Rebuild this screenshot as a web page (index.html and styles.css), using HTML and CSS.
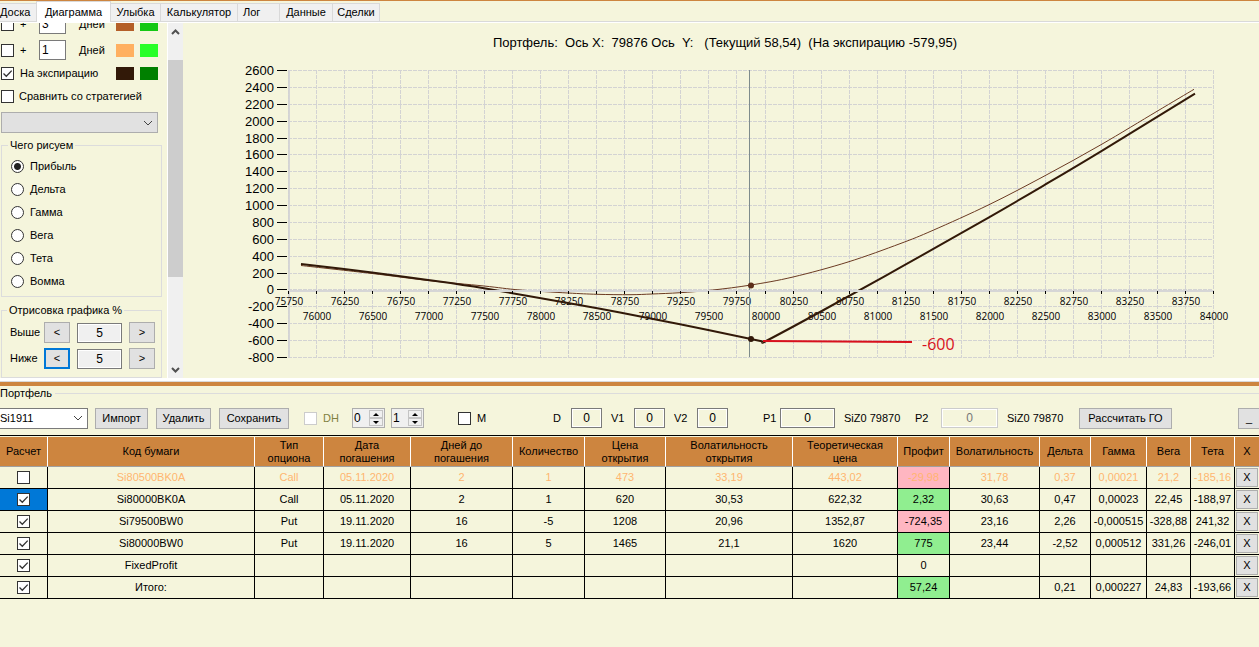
FILE: index.html
```html
<!DOCTYPE html>
<html lang="ru">
<head>
<meta charset="utf-8">
<title>Портфель опционов</title>
<link rel="stylesheet" href="styles.css">
</head>
<body>
<nav class="tabs" role="tablist">
  <button class="tab tab-first" role="tab">Доска</button>
  <button class="tab tab-active" role="tab" aria-selected="true">Диаграмма</button>
  <button class="tab" role="tab">Улыбка</button>
  <button class="tab" role="tab">Калькулятор</button>
  <button class="tab tab-log" role="tab">Лог</button>
  <button class="tab" role="tab">Данные</button>
  <button class="tab tab-last" role="tab">Сделки</button>
</nav>

<main class="workspace">
  <aside class="side">
    <div class="side-body">
      <div class="days">
        <label class="check"><input type="checkbox"> +</label>
        <input class="box" type="text" value="3" aria-label="Дней вперед">
        <span>Дней</span><i class="swatch rust"></i><i class="swatch green"></i>
      </div>
      <div class="days">
        <label class="check"><input type="checkbox"> +</label>
        <input class="box" type="text" value="1" aria-label="Дней вперед">
        <span>Дней</span><i class="swatch peach"></i><i class="swatch lime"></i>
      </div>
      <div class="days expiry">
        <label class="check wide"><input type="checkbox" checked> На экспирацию</label>
        <i class="swatch brown"></i><i class="swatch forest"></i>
      </div>
      <label class="check compare"><input type="checkbox"> Сравнить со стратегией</label>
      <select class="strategy" aria-label="Стратегия"><option></option></select>
      <fieldset class="group kinds">
        <legend>Чего рисуем</legend>
        <label><input type="radio" name="kind" checked>Прибыль</label>
        <label><input type="radio" name="kind">Дельта</label>
        <label><input type="radio" name="kind">Гамма</label>
        <label><input type="radio" name="kind">Вега</label>
        <label><input type="radio" name="kind">Тета</label>
        <label><input type="radio" name="kind">Вомма</label>
      </fieldset>
      <fieldset class="group range">
        <legend>Отрисовка графика %</legend>
        <label for="above">Выше</label><button class="btn">&lt;</button><input id="above" class="box readonly" type="text" value="5"><button class="btn">&gt;</button>
        <label for="below">Ниже</label><button class="btn focused">&lt;</button><input id="below" class="box readonly" type="text" value="5"><button class="btn">&gt;</button>
      </fieldset>
    </div>
    <div class="scroll">
      <button aria-label="Вверх"><svg width="9" height="6" viewBox="0 0 9 6"><path d="M1 5 4.500 1.500 8 5"/></svg></button>
      <div class="scroll-track"><div class="scroll-thumb"></div></div>
      <button aria-label="Вниз"><svg width="9" height="6" viewBox="0 0 9 6"><path d="M1 1 4.500 4.500 8 1"/></svg></button>
    </div>
  </aside>
  <section class="plot">
    <svg id="chart" class="chart" viewBox="183 23 1076 355" role="img" aria-label="Прибыль портфеля"></svg>
  </section>
</main>

<section class="portfolio">
  <h2 class="portfolio-title">Портфель</h2>
  <form class="toolbar">
    <select class="portfolio-select" aria-label="Портфель"><option>Si1911</option></select>
    <button type="button" class="btn import">Импорт</button>
    <button type="button" class="btn delete">Удалить</button>
    <button type="button" class="btn save">Сохранить</button>
    <label class="check dim"><input type="checkbox" disabled> DH</label>
    <span class="spin"><input type="text" value="0" aria-label="DH от"><span class="spin-keys"><button type="button" aria-label="Больше"></button><button type="button" aria-label="Меньше" class="down"></button></span></span>
    <span class="spin"><input type="text" value="1" aria-label="DH до"><span class="spin-keys"><button type="button" aria-label="Больше"></button><button type="button" aria-label="Меньше" class="down"></button></span></span>
    <label class="check"><input type="checkbox"> M</label>
    <label for="d">D</label><input id="d" class="box num" type="text" value="0">
    <label for="v1">V1</label><input id="v1" class="box num" type="text" value="0">
    <label for="v2">V2</label><input id="v2" class="box num" type="text" value="0">
    <label for="p1">P1</label><input id="p1" class="box num price" type="text" value="0">
    <span>SiZ0 79870</span>
    <label for="p2">P2</label><input id="p2" class="box num price" type="text" value="0" disabled>
    <span>SiZ0 79870</span>
    <button type="button" class="btn calc">Рассчитать ГО</button>
    <button type="button" class="btn minimize">_</button>
  </form>
  <table class="grid">
    <colgroup>
      <col class="w48"><col class="w207"><col class="w69"><col class="w87"><col class="w102"><col class="w72"><col class="w81"><col class="w127"><col class="w105"><col class="w52"><col class="w90"><col class="w51"><col class="w56"><col class="w44"><col class="w44"><col class="w24">
    </colgroup>
    <thead>
      <tr><th>Расчет</th><th>Код бумаги</th><th>Тип<br>опциона</th><th>Дата<br>погашения</th><th>Дней до<br>погашения</th><th>Количество</th><th>Цена<br>открытия</th><th>Волатильность<br>открытия</th><th>Теоретическая<br>цена</th><th>Профит</th><th>Волатильность</th><th>Дельта</th><th>Гамма</th><th>Вега</th><th>Тета</th><th>X</th></tr>
    </thead>
    <tbody>
      <tr class="off"><td><input type="checkbox" aria-label="Расчет"></td><td>Si80500BK0A</td><td>Call</td><td>05.11.2020</td><td>2</td><td>1</td><td>473</td><td>33,19</td><td>443,02</td><td class="loss">-29,98</td><td>31,78</td><td>0,37</td><td>0,00021</td><td>21,2</td><td>-185,16</td><td><button class="btn">X</button></td></tr>
      <tr><td class="current"><input type="checkbox" checked aria-label="Расчет"></td><td>Si80000BK0A</td><td>Call</td><td>05.11.2020</td><td>2</td><td>1</td><td>620</td><td>30,53</td><td>622,32</td><td class="gain">2,32</td><td>30,63</td><td>0,47</td><td>0,00023</td><td>22,45</td><td>-188,97</td><td><button class="btn">X</button></td></tr>
      <tr><td><input type="checkbox" checked aria-label="Расчет"></td><td>Si79500BW0</td><td>Put</td><td>19.11.2020</td><td>16</td><td>-5</td><td>1208</td><td>20,96</td><td>1352,87</td><td class="loss">-724,35</td><td>23,16</td><td>2,26</td><td>-0,000515</td><td>-328,88</td><td>241,32</td><td><button class="btn">X</button></td></tr>
      <tr><td><input type="checkbox" checked aria-label="Расчет"></td><td>Si80000BW0</td><td>Put</td><td>19.11.2020</td><td>16</td><td>5</td><td>1465</td><td>21,1</td><td>1620</td><td class="gain">775</td><td>23,44</td><td>-2,52</td><td>0,000512</td><td>331,26</td><td>-246,01</td><td><button class="btn">X</button></td></tr>
      <tr><td><input type="checkbox" checked aria-label="Расчет"></td><td>FixedProfit</td><td></td><td></td><td></td><td></td><td></td><td></td><td></td><td>0</td><td></td><td></td><td></td><td></td><td></td><td><button class="btn">X</button></td></tr>
      <tr><td><input type="checkbox" checked aria-label="Расчет"></td><td>Итого:</td><td></td><td></td><td></td><td></td><td></td><td></td><td></td><td class="gain">57,24</td><td></td><td>0,21</td><td>0,000227</td><td>24,83</td><td>-193,66</td><td><button class="btn">X</button></td></tr>
    </tbody>
  </table>
</section>
<script src="chart.js"></script>
</body>
</html>
```

FILE: styles.css
```css
* { box-sizing: border-box; }

body {
  margin: 0;
  background: #f5f5dc;
  color: #000;
  font: 11px/13px "Liberation Sans", Arial, sans-serif;
  overflow-x: hidden;
}

button, input, select { font: inherit; color: inherit; margin: 0; }

/* Tabs */
.tabs {
  display: flex;
  align-items: flex-end;
  height: 23px;
  border-top: 1px solid #cd853f;
  border-bottom: 1px solid #fff;
  box-shadow: inset 0 -1px #d9d9d9;
}
.tab {
  height: 19px;
  padding: 0 5px;
  border: 1px solid #d9d9d9;
  border-left: 0;
  background: #f0f0f0;
  white-space: nowrap;
}
.tab-first { width: 36px; padding: 0; border-right: 0; text-align: left; }
.tab-active { width: 75px; height: 21px; padding: 0; border: 1px solid #d9d9d9; border-bottom: 0; background: #fff; }
.tab:nth-child(3) { width: 50px; padding: 0; }
.tab:nth-child(4) { width: 77px; padding: 0; }
.tab-log { width: 42px; text-align: left; }
.tab:nth-child(6) { width: 53px; }
.tab-last { width: 47px; padding: 0; }

/* Upper half */
.workspace { display: flex; align-items: stretch; height: 355px; }
.side { flex: none; display: flex; width: 183px; overflow: hidden; }
.side-body { width: 168px; margin-top: -9px; padding-left: 1px; border-right: 1px solid #fff; }
.plot { flex: 1; min-width: 0; }
.chart { display: block; width: 100%; height: 100%; }

/* Check boxes and radios */
input[type="checkbox"], input[type="radio"] {
  appearance: none;
  flex: none;
  width: 13px;
  height: 13px;
  border: 1px solid #333;
  background: #fff;
}
input[type="checkbox"]:checked {
  background: #fff url("data:image/svg+xml,%3Csvg xmlns='http://www.w3.org/2000/svg' viewBox='0 0 11 11'%3E%3Cpath d='M1.500 5.500 4.300 8.300 9.700 2.600' fill='none' stroke='%23333' stroke-width='1.300'/%3E%3C/svg%3E") center / 11px 11px no-repeat;
}
input[type="checkbox"]:disabled { border-color: #ccc; }
input[type="radio"] { border-radius: 50%; }
input[type="radio"]:checked { background: radial-gradient(circle, #222 3px, #fff 4px); }
.check { display: flex; align-items: center; gap: 6px; white-space: nowrap; }
.dim { color: #808040; }

/* Text boxes and buttons */
.box { height: 20px; padding: 0 2px; border: 1px solid #7a7a7a; background: #fff; font-size: 12px; }
.readonly { background: #f0f0f0; text-align: center; box-shadow: inset 0 0 0 1px #fff; }
.num { width: 31px; background: #f5f5dc; text-align: center; box-shadow: inset 0 0 0 1px #fff; }
.price { width: 55px; }
.num:disabled { width: 57px; border-color: #ccc; color: #777; }
.btn { height: 21px; padding: 0; border: 1px solid #adadad; background: #e1e1e1; text-align: center; white-space: nowrap; }
.focused { border: 2px solid #0078d7; }

/* Side panel */
.days {
  display: grid;
  grid-template-columns: 38px 40px 37px 18px 24px;
  align-items: center;
  height: 20px;
  margin-bottom: 6px;
}
.days .box { width: 27px; }
.days .swatch:last-child { margin-left: 6px; }
.expiry { height: 14px; margin-bottom: 9px; }
.wide { grid-column: span 3; }
.swatch { width: 18px; height: 13px; }
.rust { background: #b45f28; }
.green { background: #14c814; }
.peach { background: #ffb060; }
.lime { background: #28ff28; }
.brown { background: #321908; }
.forest { background: #008000; }
.strategy, .portfolio-select {
  appearance: none;
  display: block;
  border: 1px solid #adadad;
  background: #e1e1e1 url("data:image/svg+xml,%3Csvg xmlns='http://www.w3.org/2000/svg' viewBox='0 0 10 6'%3E%3Cpath d='M1 1 5 5 9 1' fill='none' stroke='%23444'/%3E%3C/svg%3E") right 4px center / 10px 6px no-repeat;
}
.compare { height: 14px; gap: 5px; }
.strategy { width: 157px; height: 21px; margin-top: 9px; }

.group {
  width: 161px;
  min-width: 0;
  margin: 0;
  padding: 0 0 0 9px;
  border: 1px solid #dcdcdc;
}
.group legend { height: 13px; margin-left: -3px; padding: 0 2px; }
.kinds { margin-top: 6px; padding-bottom: 3px; }
.kinds label { display: flex; align-items: center; gap: 6px; height: 23px; }
.kinds legend + label { margin-top: 3px; }
.range {
  display: grid;
  grid-template-columns: 34px 33px 52px 26px;
  row-gap: 5px;
  align-items: center;
  margin-top: 7px;
  padding: 5px 0 8px 8px;
}
.range .btn { width: 26px; }
.range .box { width: 45px; }

.scroll { display: flex; flex-direction: column; width: 15px; background: #f0f0f0; }
.scroll button { display: grid; place-items: center; height: 17px; padding: 0; border: 0; background: none; }
.scroll path { fill: none; stroke: #505050; stroke-width: 2; }
.scroll-track { flex: 1; padding-top: 20px; }
.scroll-thumb { height: 72%; background: #cdcdcd; }

/* Chart */
.mesh { stroke: #d3d3d3; stroke-dasharray: 4 1; shape-rendering: crispEdges; }
.axis { stroke: #d6d6d6; stroke-width: 2; shape-rendering: crispEdges; }
.tick { stroke: #000; shape-rendering: crispEdges; }
.cursor { stroke: #7f8c8c; shape-rendering: crispEdges; }
.title { font-size: 13px; text-anchor: middle; white-space: pre; }
.y-label { font-size: 13px; text-anchor: end; }
.x-label { font: 10px "Open Sans", sans-serif; text-anchor: middle; }
.now { fill: none; stroke: #6b3a22; }
.expiration { fill: none; stroke: #321908; stroke-width: 2; }
.now-dot { fill: #5c2e1a; }
.expiration-dot { fill: #321908; }
.note-line { stroke: #d8101c; stroke-width: 2; }
.note { fill: #d8101c; font: 16px "Open Sans", sans-serif; }

/* Portfolio */
.portfolio { border-top: 4px solid #cd853f; box-shadow: 0 -1px #d9d9d9, 0 -4px #fff; margin-top: 4px; }
.portfolio-title { display: flex; align-items: center; gap: 3px; height: 14px; margin: 0; font-size: 11px; font-weight: 400; }
.portfolio-title::after { content: ""; flex: 1; height: 1px; background: #dcdcdc; }
.toolbar {
  display: grid;
  grid-template-columns: 95px 61px 63px 85px 48px 39px 67px 95px 18px 40px 23px 40px 23px 66px 17px 64px 71px 26px 66px 72px 1fr 21px;
  align-items: center;
  height: 36px;
  padding-top: 1px;
  border-bottom: 1px solid #000;
  margin-bottom: 1px;
  white-space: nowrap;
}
.portfolio-select { width: 88px; height: 21px; padding: 0; border: 1px solid #7a7a7a; border-left: 0; background-color: #fff; }
.import { width: 53px; }
.delete { width: 55px; }
.save { width: 70px; }
.calc { width: 93px; }
.minimize { border-right: 0; }
.spin { display: flex; width: 33px; height: 20px; padding: 1px; border: 1px solid #adadad; background: #f0f0f0; }
.spin input { width: 15px; padding: 0; border: 0; background: none; font-size: 12px; }
.spin-keys { flex: 1; display: flex; flex-direction: column; }
.spin-keys button { display: grid; place-items: center; flex: 1; min-height: 0; padding: 0; border: 1px solid #c4c4c4; background: #f0f0f0; }
.spin-keys button::before { content: ""; border: 3px solid transparent; border-top-width: 0; border-bottom: 3px solid #000; }
.spin-keys .down::before { border-top: 3px solid #000; border-bottom-width: 0; }

.grid { width: 100%; table-layout: fixed; border-collapse: separate; border-spacing: 0; text-align: center; white-space: nowrap; }
.grid th { height: 30px; padding: 0; border-right: 1px solid #fff; border-bottom: 1px solid #a0a0a0; background: #cd853f; font-weight: 400; }
.grid td { height: 22px; padding: 0; border-right: 1px solid #000; border-bottom: 1px solid #000; }
.grid td:last-child, .grid th:last-child { border-right: 0; }
.grid td input { display: block; margin: 0 auto; }
.grid .btn { display: block; width: 22px; height: 19px; margin: 0 auto; }
.off td:not(:last-child) { color: #ffb570; }
.grid .current { background: #0078d7; }
.loss { background: #ffb6c1; }
.gain { background: #90ee90; }
.w24 { width: 24px; }
.w44 { width: 44px; }
.w48 { width: 48px; }
.w51 { width: 51px; }
.w52 { width: 52px; }
.w56 { width: 56px; }
.w69 { width: 69px; }
.w72 { width: 72px; }
.w81 { width: 81px; }
.w87 { width: 87px; }
.w90 { width: 90px; }
.w102 { width: 102px; }
.w105 { width: 105px; }
.w127 { width: 127px; }
.w207 { width: 207px; }
```

FILE: chart.js
```js
const chart = document.getElementById('chart');
const LEFT = 288, RIGHT = 1213, TOP = 70, BOTTOM = 357;
const MIN_PRICE = 75750, MAX_PRICE = 84000, MAX_PROFIT = 2600, MIN_PROFIT = -800;

const px = price => Math.round(LEFT + (price - MIN_PRICE) / (MAX_PRICE - MIN_PRICE) * (RIGHT - LEFT));
const py = profit => Math.round(TOP + (MAX_PROFIT - profit) / (MAX_PROFIT - MIN_PROFIT) * (BOTTOM - TOP));

function add(name, attrs, text) {
  const el = document.createElementNS('http://www.w3.org/2000/svg', name);
  for (const key in attrs) el.setAttribute(key, attrs[key]);
  if (text !== undefined) el.textContent = text;
  chart.append(el);
}
const line = (cls, x1, y1, x2, y2) => add('line', { class: cls, x1, y1, x2, y2 });

// Catmull-Rom spline through the points
function smooth(p) {
  let d = `M${p[0]}`;
  for (let i = 0; i < p.length - 1; i++) {
    const a = p[i - 1] || p[i], b = p[i], c = p[i + 1], e = p[i + 2] || c;
    d += `C${b[0] + (c[0] - a[0]) / 6} ${b[1] + (c[1] - a[1]) / 6} ${c[0] - (e[0] - b[0]) / 6} ${c[1] - (e[1] - b[1]) / 6} ${c[0]} ${c[1]}`;
  }
  return d;
}

add('text', { class: 'title', x: 725, y: 47 }, 'Портфель:  Ось X:  79876 Ось  Y:   (Текущий 58,54)  (На экспирацию -579,95)');

for (let v = MAX_PROFIT; v >= MIN_PROFIT; v -= 200) {
  const y = py(v);
  line('mesh', LEFT, y + 0.5, RIGHT, y + 0.5);
  line('tick', 277, y + 0.5, 287, y + 0.5);
  add('text', { class: 'y-label', x: 274, y: y + 5 }, v);
}
line('axis', LEFT + 1, TOP, LEFT + 1, BOTTOM);
for (let p = MIN_PRICE, i = 0; p <= MAX_PRICE; p += 250, i++) {
  const x = px(p);
  line('mesh', x + 0.5, TOP, x + 0.5, BOTTOM);
  add('text', { class: 'x-label', x: x + 1, y: i % 2 ? 320 : 305 }, p);
}
line('cursor', 749.5, TOP, 749.5, BOTTOM);

add('path', { class: 'now', d: smooth([[301, 265.5], [372, 273.5], [428, 280.5], [484, 286], [520, 290], [568, 293], [597, 294.3], [630, 294.7], [652, 294], [680, 292.7], [713, 290], [751, 285], [793, 277], [848, 262], [900, 243.7], [933, 230.3], [989, 204.7], [1045, 175.7], [1101, 144.7], [1157, 111.3], [1194, 89.3]]) });
add('path', { class: 'expiration', d: smooth([[301, 264], [372, 272.5], [428, 280], [484, 288.3], [568, 303], [620, 312.5], [680, 324.3], [751, 339], [764, 342]]) });
add('path', { class: 'expiration', d: smooth([[763, 342], [768, 340], [820, 312], [900, 267.7], [989, 217.3], [1045, 184.7], [1101, 151.3], [1195, 93.7]]) });

line('axis', LEFT, 291, RIGHT, 291);
for (let p = MIN_PRICE; p <= MAX_PRICE; p += 250) line('tick', px(p) + 0.5, 291, px(p) + 0.5, 294);
add('circle', { class: 'now-dot', cx: 751, cy: 285.5, r: 3 });
add('circle', { class: 'expiration-dot', cx: 751, cy: 339, r: 3 });
line('note-line', 763, 341, 912, 342);
add('text', { class: 'note', x: 922, y: 350 }, '-600');
```
